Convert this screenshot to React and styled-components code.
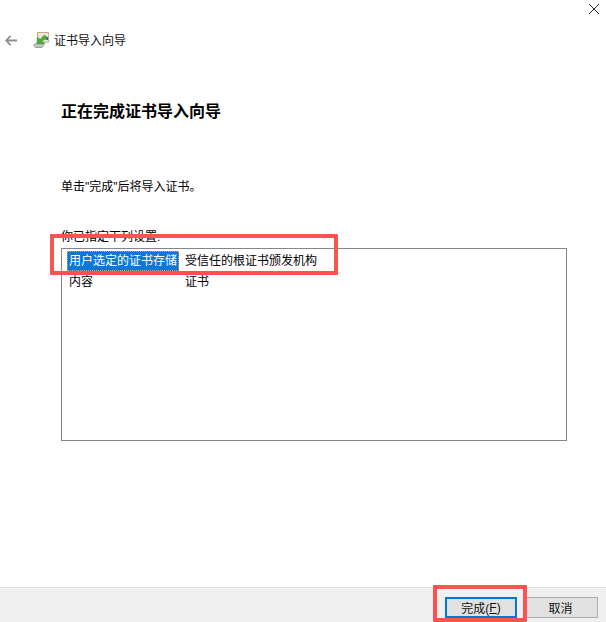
import styled, { createGlobalStyle } from 'styled-components';

const GlobalStyle = createGlobalStyle`
  html, body {
    margin: 0;
    padding: 0;
    background: #fff;
  }
`;

export default function App() {
  return (
    <>
      <GlobalStyle />
      <Window>
        <TitleBar>
          <CloseBtn>
            <svg width="12" height="12" viewBox="0 0 12 12">
              <path d="M1 1 L11 11 M11 1 L1 11" stroke="#222" strokeWidth="1" fill="none" />
            </svg>
          </CloseBtn>
        </TitleBar>
        <NavRow>
          <BackBtn>
            <svg width="12" height="11" viewBox="0 0 12 11">
              <path d="M5.5 0.8 L1.2 5.5 L5.5 10.2 M1.5 5.5 H12" stroke="#8f8f8f" strokeWidth="1.8" fill="none" />
            </svg>
          </BackBtn>
          <WizardIcon>
            <svg width="16" height="16" viewBox="0 0 16 16">
              <rect x="4.5" y="0.5" width="11" height="9.5" fill="#f1e8d2" stroke="#b9ae96" />
              <rect x="11" y="5" width="2" height="3" fill="#e8a020" />
              <rect x="13" y="5" width="2" height="3" fill="#2f6fc0" />
              <path d="M0.5 13 L4 11 H12 L9 15.5 H2.5 Z" fill="#c2c6c6" stroke="#7d8282" strokeWidth="0.7" />
              <path d="M11.5 3 L13.5 5 L9 9.5 L11 11.5 L4 12 L4.5 5 L7 7.5 Z" fill="#4caf3a" stroke="#2f7d28" strokeWidth="0.5" />
            </svg>
          </WizardIcon>
          <WizardTitle>证书导入向导</WizardTitle>
        </NavRow>
        <Content>
          <Heading>正在完成证书导入向导</Heading>
          <Intro>单击"完成"后将导入证书。</Intro>
          <ListLabel>你已指定下列设置:</ListLabel>
          <ListBox>
            <ListRow>
              <KeyCell $selected>用户选定的证书存储</KeyCell>
              <span>受信任的根证书颁发机构</span>
            </ListRow>
            <ListRow>
              <KeyCell>内容</KeyCell>
              <span>证书</span>
            </ListRow>
          </ListBox>
        </Content>
        <Footer>
          <Button $primary>完成(<u>F</u>)</Button>
          <Button>取消</Button>
        </Footer>
        <Callout $left={50} $top={234} $width={288} $height={41} />
        <Callout $left={433} $top={585} $width={94} $height={37} />
      </Window>
    </>
  );
}

const Window = styled.div`
  position: relative;
  width: 606px;
  height: 622px;
  display: flex;
  flex-direction: column;
  overflow: hidden;
  background: #fff;
  color: #000;
  font-family: "Liberation Sans", "Noto Sans CJK SC", sans-serif;
  font-size: 12px;
`;

const TitleBar = styled.div`
  height: 26px;
  flex: none;
  display: flex;
  justify-content: flex-end;
`;

const CloseBtn = styled.div`
  width: 46px;
  height: 18px;
  display: flex;
  align-items: center;
  justify-content: center;
  margin-right: -11px;
`;

const NavRow = styled.div`
  height: 28px;
  flex: none;
  display: flex;
  align-items: center;
  padding-left: 5px;
`;

const BackBtn = styled.div`
  width: 12px;
  height: 11px;
  display: flex;
  margin-right: 16px;
`;

const WizardIcon = styled.div`
  width: 16px;
  height: 16px;
  display: flex;
  margin-right: 5px;
`;

const WizardTitle = styled.div`
  font-size: 12px;
  line-height: 16px;
  padding-top: 2px;
  color: #111;
`;

const Content = styled.div`
  flex: 1;
  display: flex;
  flex-direction: column;
  padding: 0 39px 0 61px;
`;

const Heading = styled.h1`
  margin: 46px 0 0;
  font-size: 16px;
  line-height: 24px;
  font-weight: 700;
`;

const Intro = styled.div`
  margin-top: 54px;
  line-height: 18px;
`;

const ListLabel = styled.div`
  margin-top: 32px;
  line-height: 18px;
`;

const ListBox = styled.div`
  margin-top: 2px;
  height: 193px;
  box-sizing: border-box;
  border: 1px solid #82878c;
  padding-top: 2px;
  display: flex;
  flex-direction: column;
  gap: 1px;
  background: #fff;
`;

const ListRow = styled.div`
  display: flex;
  align-items: center;
  height: 20px;
  padding-left: 5px;
  line-height: 20px;
  white-space: nowrap;
`;

const KeyCell = styled.span`
  width: 112px;
  box-sizing: border-box;
  padding-left: 2px;
  margin-right: 6px;
  height: 20px;
  background: ${(p) => (p.$selected ? '#0a78d7' : 'transparent')};
  color: ${(p) => (p.$selected ? '#fff' : '#000')};
  outline: ${(p) => (p.$selected ? '1px dotted #f0a030' : 'none')};
  outline-offset: -1px;
`;

const Footer = styled.div`
  height: 35px;
  box-sizing: border-box;
  flex: none;
  display: flex;
  justify-content: flex-end;
  align-items: flex-start;
  gap: 6px;
  padding: 9px 8px 0 0;
  background: #f0f0f0;
  border-top: 1px solid #dfdfdf;
`;

const Button = styled.div`
  width: ${(p) => (p.$primary ? '72px' : '75px')};
  height: 21px;
  box-sizing: border-box;
  display: flex;
  align-items: center;
  justify-content: center;
  background: #e1e1e1;
  border: ${(p) => (p.$primary ? '2px solid #0078d7' : '1px solid #adadad')};
  font-size: 12px;
  color: #111;
  white-space: pre;
`;

const Callout = styled.div`
  position: absolute;
  left: ${(p) => p.$left}px;
  top: ${(p) => p.$top}px;
  width: ${(p) => p.$width}px;
  height: ${(p) => p.$height}px;
  box-sizing: border-box;
  border: 4px solid #fb5252;
  border-radius: 1px;
`;
